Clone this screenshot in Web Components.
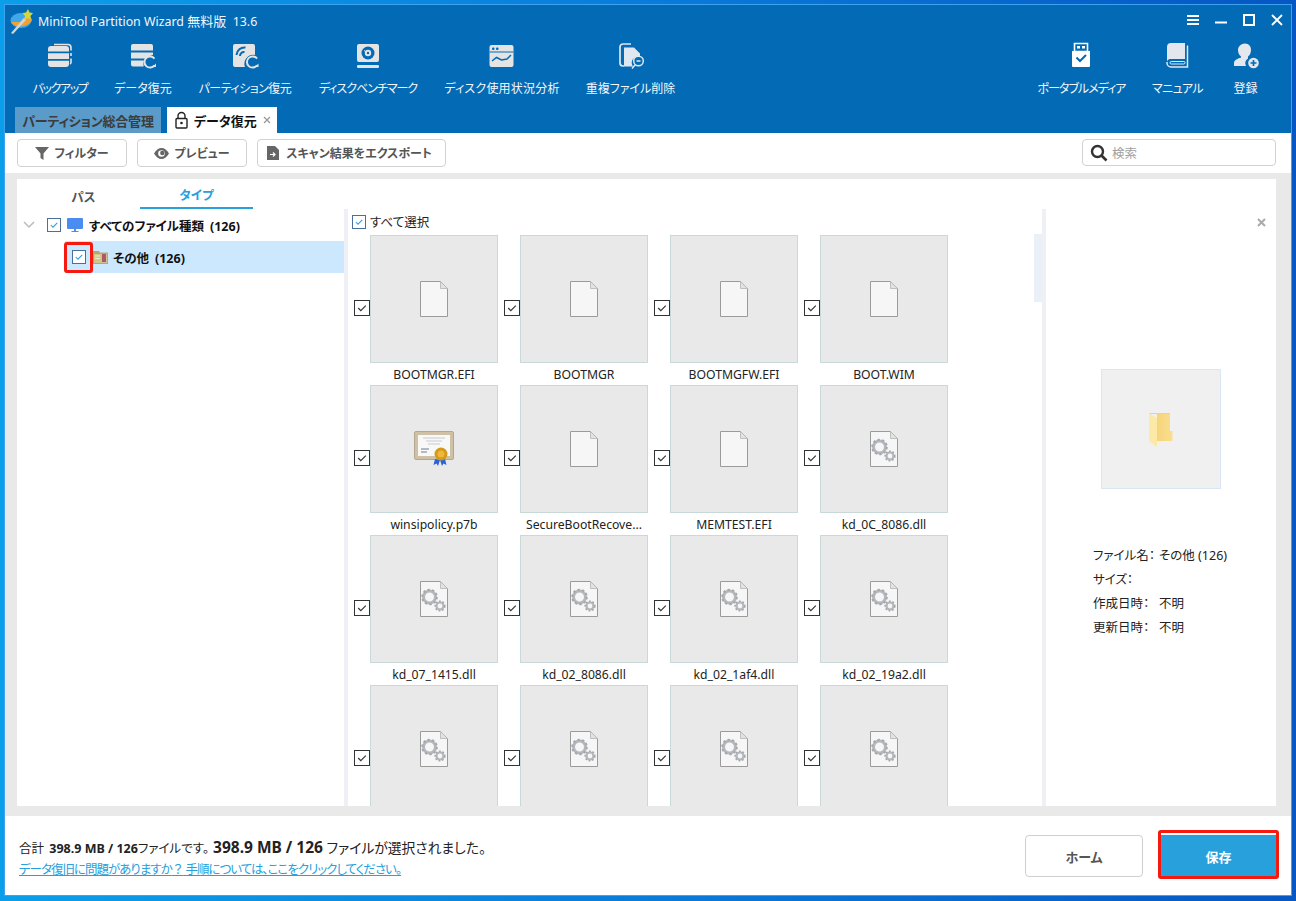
<!DOCTYPE html>
<html lang="ja">
<head>
<meta charset="utf-8">
<title>MiniTool Partition Wizard</title>
<style>
  html, body { margin: 0; height: 901px; overflow: hidden; }
  body {
    padding: 4px;
    box-sizing: border-box;
    background: linear-gradient(90deg, #0a9fea 0%, #0a7fdc 45%, #0657c4 100%);
    font-family: "Noto Sans", "Noto Sans CJK JP", sans-serif;
    font-feature-settings: "palt";
    font-size: 12px;
    color: #222;
  }
</style>
</head>
<body>
<mt-app></mt-app>

<script>
// icons used by the toolbar and the file cards
const ICONS = {
  backup: `<svg width="30" height="28" viewBox="0 0 30 28">
    <path d="M9 2.5h14a3 3 0 0 1 3 3v3M26 11v3M26 16.500v4a2 2 0 0 1-1 1.500" fill="none" stroke="#e4e4e4" stroke-width="1.600"/>
    <path d="M3 7a3 3 0 0 1 3-3h15a3 3 0 0 1 3 3v2.500H3zM3 11.300h21v5.700H3zM3 18.800h21V22a3 3 0 0 1-3 3H6a3 3 0 0 1-3-3z" fill="#e4e4e4"/></svg>`,
  recover: `<svg width="30" height="28" viewBox="0 0 30 28">
    <path d="M3 4a2 2 0 0 1 2-2h18a2 2 0 0 1 2 2v4.500H3zM3 10.500h22v2.600a9 9 0 0 0-6 3.400H3zM3 18.500h13a9 9 0 0 0-.4 6H5a2 2 0 0 1-2-2z" fill="#e4e4e4"/>
    <path d="M26.500 16.600a5.600 5.600 0 1 0 0 6.800" fill="none" stroke="#e4e4e4" stroke-width="2"/>
    <path d="M28 21.500v3.500h-3.500z" fill="#e4e4e4"/></svg>`,
  partition: `<svg width="30" height="28" viewBox="0 0 30 28">
    <path d="M3 4a2 2 0 0 1 2-2h18a2 2 0 0 1 2 2v9a9 9 0 0 0-10 12H5a2 2 0 0 1-2-2z" fill="#e4e4e4"/>
    <path d="M6.500 13a8 8 0 0 1 9-7.500M10 14a4 4 0 0 1 4.500-4" fill="none" stroke="#036ab5" stroke-width="2"/>
    <path d="M27 16.600a5.600 5.600 0 1 0 0 6.800" fill="none" stroke="#e4e4e4" stroke-width="2"/>
    <path d="M28.500 21.500v3.500H25z" fill="#e4e4e4"/></svg>`,
  bench: `<svg width="30" height="28" viewBox="0 0 30 28">
    <rect x="4" y="2" width="22" height="18" rx="2" fill="#e4e4e4"/>
    <circle cx="15" cy="11" r="6.500" fill="#036ab5"/><circle cx="15" cy="11" r="3.200" fill="#e4e4e4"/><circle cx="15" cy="11" r="1.200" fill="#036ab5"/>
    <path d="M11 8.500l3 2" stroke="#e4e4e4" stroke-width="1"/>
    <rect x="4" y="23" width="22" height="3" rx="1" fill="#e4e4e4"/></svg>`,
  usage: `<svg width="30" height="28" viewBox="0 0 30 28">
    <rect x="2.500" y="3" width="24" height="22" rx="2" fill="#e4e4e4"/>
    <rect x="5" y="5.500" width="2.500" height="2.500" rx="1" fill="#036ab5"/><rect x="9" y="5.500" width="2.500" height="2.500" rx="1" fill="#036ab5"/>
    <rect x="2.500" y="9.500" width="24" height="1" fill="#036ab5"/>
    <path d="M5 19l4.500-3.500 5 2.500 5.500-1 4-4" fill="none" stroke="#036ab5" stroke-width="1.500"/></svg>`,
  dup: `<svg width="30" height="28" viewBox="0 0 30 28">
    <path d="M8 24H7a3 3 0 0 1-3-3V5a3 3 0 0 1 3-3h8" fill="none" stroke="#dfe7f0" stroke-width="1.700"/>
    <path d="M8 5.500h10l6 6v3a6.500 6.500 0 0 0-7 10H8z" fill="#dfe7f0"/>
    <circle cx="22.500" cy="19" r="4.800" fill="none" stroke="#dfe7f0" stroke-width="1.500"/>
    <path d="M20.500 19h4M19 23l-3 3.500" stroke="#dfe7f0" stroke-width="1.500"/></svg>`,
  usb: `<svg width="30" height="28" viewBox="0 0 30 28">
    <path d="M7.500 1.500h13v8h-13z" fill="none" stroke="#fff" stroke-width="1.600"/>
    <rect x="10" y="4" width="3" height="2.500" fill="#fff"/><rect x="15" y="4" width="3" height="2.500" fill="#fff"/>
    <path d="M5 9h18v15a1 1 0 0 1-1 1H6a1 1 0 0 1-1-1z" fill="#fff"/>
    <path d="M9.500 15.500l3.500 3.500 6-6" fill="none" stroke="#036ab5" stroke-width="2"/></svg>`,
  book: `<svg width="30" height="28" viewBox="0 0 30 28">
    <path d="M4 5a4 4 0 0 1 4-4h14v16H7.500A3.500 3.500 0 0 0 4 20z" fill="#e4e8ee"/>
    <path d="M24.500 3.500V25H8a4 4 0 0 1-4-4v-1" fill="none" stroke="#e4e8ee" stroke-width="1.500"/>
    <rect x="7" y="19.500" width="15" height="2.500" rx="1.200" fill="none" stroke="#e4e8ee" stroke-width="1"/></svg>`,
  user: `<svg width="30" height="28" viewBox="0 0 30 28">
    <path d="M14 1.500c4 0 6 3 6 6.500 0 2.500-1 5-3 6.500v2a6 6 0 0 0-2 7.500H3v-3c0-3 4-4.500 7-5.500v-1c-2-1.500-3-4-3-6.500 0-3.500 3-6.500 7-6.500z" fill="#e4e8ee"/>
    <circle cx="22.500" cy="21" r="5.300" fill="#e4e8ee"/>
    <path d="M19.500 21h6M22.500 18v6" stroke="#036ab5" stroke-width="1.700"/></svg>`,
  doc: `<svg width="28" height="36" viewBox="0 0 28 36">
    <path d="M.5.500h20l7 7v28H.500z" fill="#f6f6f6" stroke="#9b9b9b"/>
    <path d="M20.500.500v7h7z" fill="#e2e2e2" stroke="#b5b5b5" stroke-width=".8"/></svg>`,
  gear: `<svg width="28" height="36" viewBox="0 0 28 36">
    <path d="M.5.500h20l7 7v28H.500z" fill="#f6f6f6" stroke="#9b9b9b"/>
    <path d="M20.500.500v7h7z" fill="#e2e2e2" stroke="#b5b5b5" stroke-width=".8"/>
    <circle cx="9.500" cy="16" r="6" fill="none" stroke="#b4b8bc" stroke-width="3"/>
    <circle cx="9.500" cy="16" r="7.300" fill="none" stroke="#a4a8ac" stroke-width="2" stroke-dasharray="2.300 2.300"/>
    <circle cx="20" cy="25" r="3.500" fill="none" stroke="#b4b8bc" stroke-width="2.200"/>
    <circle cx="20" cy="25" r="4.800" fill="none" stroke="#a4a8ac" stroke-width="1.600" stroke-dasharray="1.800 1.700"/></svg>`,
  cert: `<svg width="40" height="36" viewBox="0 0 40 36">
    <rect x=".5" y=".5" width="39" height="28" rx="1.500" fill="#cfc1a6" stroke="#b5a78c"/>
    <rect x="4" y="4" width="32" height="21" fill="#f8f8f6"/>
    <path d="M9 7h22M12 10h16M14 13h12" stroke="#c4ccd4" stroke-width="1"/>
    <path d="M7 18h8M7 21h6" stroke="#9aa7b4" stroke-width="1.500"/>
    <path d="M21 28l-1.500 6 3-1.500 1.500 2.500 2-6zM31 28l1.500 6-3-1.500-1.500 2.500-2-6z" fill="#2a63d8"/>
    <circle cx="27" cy="23" r="6.500" fill="#d49a18"/><circle cx="27" cy="23" r="3.500" fill="#eeb93a"/></svg>`,
  folder: `<svg width="24" height="34" viewBox="0 0 24 34">
    <defs><linearGradient id="fb" x1="0" x2="1" y1="0" y2="0"><stop offset="0" stop-color="#f3cf72"/><stop offset="1" stop-color="#fadf8e"/></linearGradient></defs>
    <path d="M0 0h21v18h2.500v10H8V0z" fill="url(#fb)"/>
    <path d="M0 0h21v1H0z" fill="#f5d27a"/>
    <path d="M0 0l8 5v29l-8-6z" fill="#fde9a6"/></svg>`
};

// base class: shadow root filled from a static template string
class MtElement extends HTMLElement {
  constructor() {
    super();
    this.attachShadow({ mode: 'open' });
  }
  connectedCallback() {
    this.shadowRoot.innerHTML = this.render();
  }
}

class MtTitleBar extends MtElement {
  render() {
    return `
      <style>
        :host { display: flex; align-items: center; height: 29px; color: #f2f6fa; font-size: 12.400px; flex: none; }
        .logo { margin-left: 5px; width: 24px; height: 26px; margin-top: 3px; }
        .name { margin-left: 4px; margin-top: 1px; white-space: pre; }
        .jp { font-size: 13px; }
        .ctl { margin-left: auto; display: flex; gap: 16px; margin-right: 8px; margin-top: 1px; }
        svg { display: block; }
      </style>
      <svg class="logo" viewBox="0 0 24 26">
        <ellipse cx="11" cy="12.500" rx="10.500" ry="7.500" fill="#3fa8ea"/>
        <path d="M1 14c2 6 18 6 21-2-1-3-4-4-6-4l-6 6z" fill="#f1a22e"/>
        <path d="M1 25L14 10l2 2L3 26z" fill="#d8d4cc"/>
        <path d="M18 1l1.500 3.500 3.500 .5-2.500 3 .5 3.500-3-1.500-3.500 1.500.5-3.500-2.500-3 3.500-.5z" fill="#d4d63c"/>
      </svg>
      <span class="name">MiniTool Partition Wizard <span class="jp">無料版</span>  13.6</span>
      <span class="ctl">
        <svg width="12" height="12" viewBox="0 0 12 12"><path d="M0 2h12M0 6h12M0 10h12" stroke="#fff" stroke-width="1.800"/></svg>
        <svg width="12" height="12" viewBox="0 0 12 12"><path d="M0 8.500h12" stroke="#fff" stroke-width="2"/></svg>
        <svg width="12" height="12" viewBox="0 0 12 12"><rect x="1" y="1" width="10" height="10" fill="none" stroke="#fff" stroke-width="2"/></svg>
        <svg width="12" height="12" viewBox="0 0 12 12"><path d="M1 1l10 10M11 1L1 11" stroke="#fff" stroke-width="1.800"/></svg>
      </span>`;
  }
}

class MtToolButton extends MtElement {
  render() {
    const icon = ICONS[this.getAttribute('icon')];
    const spacing = this.getAttribute('spacing') || '0';
    return `
      <style>
        :host { display: flex; flex-direction: column; align-items: center; flex: none; color: #f4f7fa; }
        .ic { height: 28px; margin-top: 8px; }
        .ic svg { display: block; }
        .lb { margin-top: 10px; white-space: nowrap; font-size: 12px; line-height: 18px; letter-spacing: ${spacing}; }
      </style>
      <div class="ic">${icon}</div>
      <div class="lb">${this.getAttribute('label')}</div>`;
  }
}

class MtTabs extends MtElement {
  render() {
    return `
      <style>
        :host { display: flex; gap: 6px; height: 26px; padding-left: 10px; align-items: stretch; flex: none; font-weight: 700; font-size: 13px; }
        div { display: flex; align-items: center; justify-content: center; white-space: nowrap; }
        .off { width: 146px; background: #5b9bc9; color: #3c3c3c; letter-spacing: -.2px; }
        .on { width: 110px; background: #fff; color: #111; justify-content: flex-start; padding-left: 8px; box-sizing: border-box; }
        .txt { margin-left: 6px; }
        .x { margin-left: 6px; }
      </style>
      <div class="off">パーティション総合管理</div>
      <div class="on">
        <svg width="13" height="18" viewBox="0 0 13 18"><path d="M3 8V5a3.500 3.500 0 0 1 7 0v3" fill="none" stroke="#222" stroke-width="1.400"/><rect x="1" y="7.500" width="11" height="9.500" rx="1" fill="none" stroke="#222" stroke-width="1.400"/><circle cx="6.500" cy="12" r="1.300" fill="#222"/></svg>
        <span class="txt">データ復元</span>
        <svg class="x" width="8" height="8" viewBox="0 0 8 8"><path d="M1 1l6 6M7 1L1 7" stroke="#999" stroke-width="1.300"/></svg>
      </div>`;
  }
}

class MtActionButton extends MtElement {
  render() {
    return `
      <style>
        :host { display: flex; align-items: center; justify-content: center; gap: 5px; height: 28px; box-sizing: border-box; border: 1px solid #d2d2d2; border-radius: 4px; color: #555; font-weight: 700; font-size: 12px; background: #fff; white-space: nowrap; flex: none; }
        ::slotted(svg) { display: block; }
      </style>
      <slot></slot><span>${this.getAttribute('label')}</span>`;
  }
}

class MtCheck extends MtElement {
  render() {
    const dark = this.hasAttribute('dark');
    const stroke = dark ? '#333' : '#2f9be0';
    return `
      <style>
        :host { display: block; flex: none; box-sizing: border-box; width: ${dark ? 16 : 14}px; height: ${dark ? 16 : 14}px; border: 1px solid ${dark ? '#333' : '#4a6f9c'}; background: #fff; }
        svg { display: block; width: 100%; height: 100%; }
      </style>
      <svg viewBox="0 0 14 14"><path d="M3.200 7l2.600 2.600 5-5" fill="none" stroke="${stroke}" stroke-width="1.200"/></svg>`;
  }
}

class MtTree extends MtElement {
  render() {
    return `
      <style>
        :host { display: block; width: 327px; flex: none; }
        .tabs { display: flex; height: 30px; padding-left: 10px; font-weight: 700; font-size: 12.500px; }
        .tabs div { width: 113px; display: flex; align-items: center; justify-content: center; box-sizing: border-box; padding-top: 4px; color: #555; }
        .tabs .on { color: #27a0dc; padding-top: 2px; border-bottom: 2px solid #27a0dc; }
        .row { display: flex; align-items: center; font-weight: 700; font-size: 12.500px; color: #111; white-space: nowrap; }
        .r1 { height: 32px; padding-left: 6px; }
        .r2 { height: 32px; margin-left: 48px; padding-left: 7px; background: #cce8ff; position: relative; }
        .mark { position: absolute; left: -1px; top: 1px; width: 29px; height: 31px; box-sizing: border-box; border: 3px solid #f5190f; border-radius: 3px; }
        .num { margin-left: 6px; }
      </style>
      <div class="tabs"><div>パス</div><div class="on">タイプ</div></div>
      <div class="row r1">
        <svg width="12" height="8" viewBox="0 0 12 8"><path d="M1 1l5 5 5-5" fill="none" stroke="#bbb" stroke-width="1.500"/></svg>
        <mt-check style="margin-left:12px"></mt-check>
        <svg style="margin-left:6px" width="16" height="15" viewBox="0 0 16 15"><rect width="16" height="11" rx="1" fill="#4a8cf0"/><path d="M7 11h2v2H7zM4.500 13h7v1h-7z" fill="#4a8cf0"/></svg>
        <span style="margin-left:6px">すべてのファイル種類<span class="num">(126)</span></span>
      </div>
      <div class="row r2">
        <span class="mark"></span>
        <mt-check></mt-check>
        <svg style="margin-left:7px" width="15" height="14" viewBox="0 0 15 14"><path d="M0 1h6l1 1.500h8V14H0z" fill="#b5aa6a"/><rect x="1" y="4" width="13" height="9" fill="#d0c58a"/><path d="M2 6h5M2 8.500h5" stroke="#f0ecd0"/><rect x="9" y="4" width="4" height="8" fill="#b0566a"/></svg>
        <span style="margin-left:5px">その他<span class="num">(126)</span></span>
      </div>`;
  }
}

class MtFileCard extends MtElement {
  render() {
    const name = this.getAttribute('name');
    return `
      <style>
        :host { display: grid; grid-template-columns: 16px 128px; grid-template-rows: 128px 22px; }
        mt-check { margin-top: 65px; }
        .thumb { box-sizing: border-box; border: 1px solid #c9d9d9; background: #e9e9e9; display: flex; align-items: center; justify-content: center; }
        .thumb svg { display: block; }
        .name { grid-column: 2; text-align: center; font-size: 12.200px; line-height: 24px; color: #222; white-space: nowrap; }
      </style>
      <mt-check dark></mt-check>
      <div class="thumb">${ICONS[this.getAttribute('icon') || 'doc']}</div>
      ${name ? `<div class="name">${name}</div>` : ''}`;
  }
}

class MtFileGrid extends MtElement {
  render() {
    // the fourth row is cut by the pane before its names, so it gets none
    const files = [
      ['doc', 'BOOTMGR.EFI'], ['doc', 'BOOTMGR'], ['doc', 'BOOTMGFW.EFI'], ['doc', 'BOOT.WIM'],
      ['cert', 'winsipolicy.p7b'], ['doc', 'SecureBootRecove...'], ['doc', 'MEMTEST.EFI'], ['gear', 'kd_0C_8086.dll'],
      ['gear', 'kd_07_1415.dll'], ['gear', 'kd_02_8086.dll'], ['gear', 'kd_02_1af4.dll'], ['gear', 'kd_02_19a2.dll'],
      ['gear', ''], ['gear', ''], ['gear', ''], ['gear', '']
    ];
    return `
      <style>
        :host { display: block; position: relative; flex: 1; min-width: 0; overflow: hidden; }
        .all { display: flex; align-items: center; gap: 4px; height: 26px; padding-left: 4px; font-size: 12.500px; color: #222; }
        .all span { margin-top: -2px; }
        .grid { display: grid; grid-template-columns: repeat(4, 150px); grid-auto-rows: 150px; padding-left: 6px; }
        .thumb-bar { position: absolute; right: 0; top: 25px; width: 8px; height: 68px; background: #e9f0f8; }
      </style>
      <div class="all"><mt-check></mt-check><span>すべて選択</span></div>
      <div class="grid">
        ${files.map(f => `<mt-file-card icon="${f[0]}" name="${f[1]}"></mt-file-card>`).join('')}
      </div>
      <div class="thumb-bar"></div>`;
  }
}

class MtPreview extends MtElement {
  render() {
    return `
      <style>
        :host { display: flex; flex-direction: column; width: 230px; flex: none; position: relative; box-sizing: border-box; }
        .x { position: absolute; right: 10px; top: 39px; }
        .box { box-sizing: border-box; width: 120px; height: 120px; margin: 190px 0 0 55px; border: 1px solid #d8e6f5; background: #f0f0f0; display: flex; align-items: center; justify-content: center; }
        .box svg { margin-top: 1px; }
        dl { margin: 53px 0 0 47px; display: grid; grid-template-columns: 66px 1fr; grid-auto-rows: 24px; align-items: center; font-size: 12.500px; color: #222; }
        dt, dd { margin: 0; white-space: nowrap; }
      </style>
      <svg class="x" width="9" height="9" viewBox="0 0 9 9"><path d="M1 1l7 7M8 1L1 8" stroke="#aaa" stroke-width="2"/></svg>
      <div class="box">${ICONS.folder}</div>
      <dl>
        <dt>ファイル名：</dt><dd>その他 (126)</dd>
        <dt>サイズ：</dt><dd></dd>
        <dt>作成日時：</dt><dd>不明</dd>
        <dt>更新日時：</dt><dd>不明</dd>
      </dl>`;
  }
}

class MtFooter extends MtElement {
  render() {
    return `
      <style>
        :host { display: flex; align-items: center; height: 79px; background: #fff; flex: none; position: relative; }
        .info { margin-left: 14px; margin-top: 3px; }
        .l1 { display: flex; align-items: baseline; height: 23px; font-size: 12.500px; white-space: pre; color: #222; }
        b { color: #222; margin-left: 2px; }
        .big { font-size: 15.500px; margin-left: 4px; }
        .tail { font-size: 13.800px; }
        a { color: #27a0dc; text-decoration: underline; font-size: 12.500px; letter-spacing: -1px; display: block; white-space: nowrap; }
        .wide { font-feature-settings: normal; }
        .btns { margin-left: auto; margin-right: 15px; display: flex; gap: 18px; }
        .home, .save { height: 42px; width: 118px; box-sizing: border-box; display: flex; align-items: center; justify-content: center; font-weight: 700; font-size: 13px; border-radius: 4px; padding-top: 1px; }
        .home { border: 1px solid #cfcfcf; color: #555; }
        .save { width: 115px; background: #27a0dc; color: #fff; position: relative; border-radius: 0; }
        .mark { position: absolute; left: -3px; right: -3px; top: -5px; bottom: -2px; border: 3px solid #f5190f; border-radius: 3px; }
      </style>
      <div class="info">
        <div class="l1">合計 <b>398.9 MB / 126</b>ファイルです。<b class="big">398.9 MB / 126</b><span class="tail"> ファイルが選択されました。</span></div>
        <a>データ復旧に問題がありますか<span class="wide">？</span> 手順については、ここをクリックしてください。</a>
      </div>
      <div class="btns">
        <div class="home">ホーム</div>
        <div class="save">保存<span class="mark"></span></div>
      </div>`;
  }
}

class MtApp extends MtElement {
  render() {
    const tools = [
      ['backup', 'バックアップ', 56, '-1.400px'], ['recover', 'データ復元', 58, '0'], ['partition', 'パーティション復元', 94, '-.500px'],
      ['bench', 'ディスクベンチマーク', 100, '-1px'], ['usage', 'ディスク使用状況分析', 116, '.200px'], ['dup', '重複ファイル削除', 89, '0']
    ];
    const btn = t => `<mt-tool-button icon="${t[0]}" label="${t[1]}" spacing="${t[3]}" style="width:${t[2]}px"></mt-tool-button>`;
    return `
      <style>
        :host { display: flex; flex-direction: column; width: 1288px; height: 892px; box-sizing: border-box; border: 1px solid #3ea2ee; background: #e9e9e9; }
        header { background: #036ab5; height: 128px; flex: none; display: flex; flex-direction: column; }
        .tools { display: flex; height: 73px; padding-left: 27px; flex: none; }
        .left { display: flex; gap: 26px; }
        .right { display: flex; gap: 26px; margin-left: auto; margin-right: 32px; }
        .right mt-tool-button:last-child { margin-left: 3px; }
        .bar { height: 40px; background: #fff; display: flex; align-items: center; gap: 10px; padding-left: 12px; flex: none; box-sizing: border-box; }
        .search { margin-left: auto; margin-right: 15px; margin-top: -1px; width: 194px; height: 27px; box-sizing: border-box; border: 1px solid #d2d2d2; border-radius: 4px; display: flex; align-items: center; padding-left: 7px; gap: 4px; color: #a0a0a0; font-size: 12.500px; }
        main { flex: 1; min-height: 0; margin: 6px 15px 10px 12px; background: #fff; display: flex; }
        .grid-wrap { flex: 1; min-width: 0; display: flex; margin-top: 30px; border-left: 4px solid #eef0f5; border-right: 4px solid #eef0f5; }
      </style>
      <header>
        <mt-title-bar></mt-title-bar>
        <div class="tools">
          <div class="left">${tools.map(btn).join('')}</div>
          <div class="right">
            ${btn(['usb', 'ポータブルメディア', 89, '-1px'])}
            ${btn(['book', 'マニュアル', 51, '-.600px'])}
            ${btn(['user', '登録', 27, '0'])}
          </div>
        </div>
        <mt-tabs></mt-tabs>
      </header>
      <div class="bar">
        <mt-action-button label="フィルター" style="width:110px"><svg width="14" height="13" viewBox="0 0 14 13"><path d="M0 0h14L8.500 6.500V13l-3-2V6.500z" fill="#666"/></svg></mt-action-button>
        <mt-action-button label="プレビュー" style="width:110px"><svg width="15" height="11" viewBox="0 0 15 11"><path d="M0 5.500C2 2 4.500 0 7.500 0S13 2 15 5.500C13 9 10.500 11 7.500 11S2 9 0 5.500z" fill="#666"/><circle cx="7.500" cy="5.500" r="3.300" fill="#fff"/><circle cx="8.300" cy="5" r="2.200" fill="#666"/></svg></mt-action-button>
        <mt-action-button label="スキャン結果をエクスポート" style="width:189px"><svg style="margin-right:2px;margin-left:-4px" width="12" height="14" viewBox="0 0 12 14"><path d="M0 0h8l4 4v10H0z" fill="#666"/><path d="M3 8.500h4.500M6 6.500l2 2-2 2" fill="none" stroke="#fff" stroke-width="1.200"/></svg></mt-action-button>
        <div class="search">
          <svg width="18" height="18" viewBox="0 0 18 18"><circle cx="7.500" cy="7.500" r="5.500" fill="none" stroke="#333" stroke-width="2.400"/><path d="M11.500 11.500l5 5" stroke="#333" stroke-width="2.600"/></svg>
          <span>検索</span>
        </div>
      </div>
      <main>
        <mt-tree></mt-tree>
        <div class="grid-wrap"><mt-file-grid></mt-file-grid></div>
        <mt-preview></mt-preview>
      </main>
      <mt-footer></mt-footer>`;
  }
}

customElements.define('mt-title-bar', MtTitleBar);
customElements.define('mt-tool-button', MtToolButton);
customElements.define('mt-tabs', MtTabs);
customElements.define('mt-action-button', MtActionButton);
customElements.define('mt-check', MtCheck);
customElements.define('mt-tree', MtTree);
customElements.define('mt-file-card', MtFileCard);
customElements.define('mt-file-grid', MtFileGrid);
customElements.define('mt-preview', MtPreview);
customElements.define('mt-footer', MtFooter);
customElements.define('mt-app', MtApp);
</script>
</body>
</html>
